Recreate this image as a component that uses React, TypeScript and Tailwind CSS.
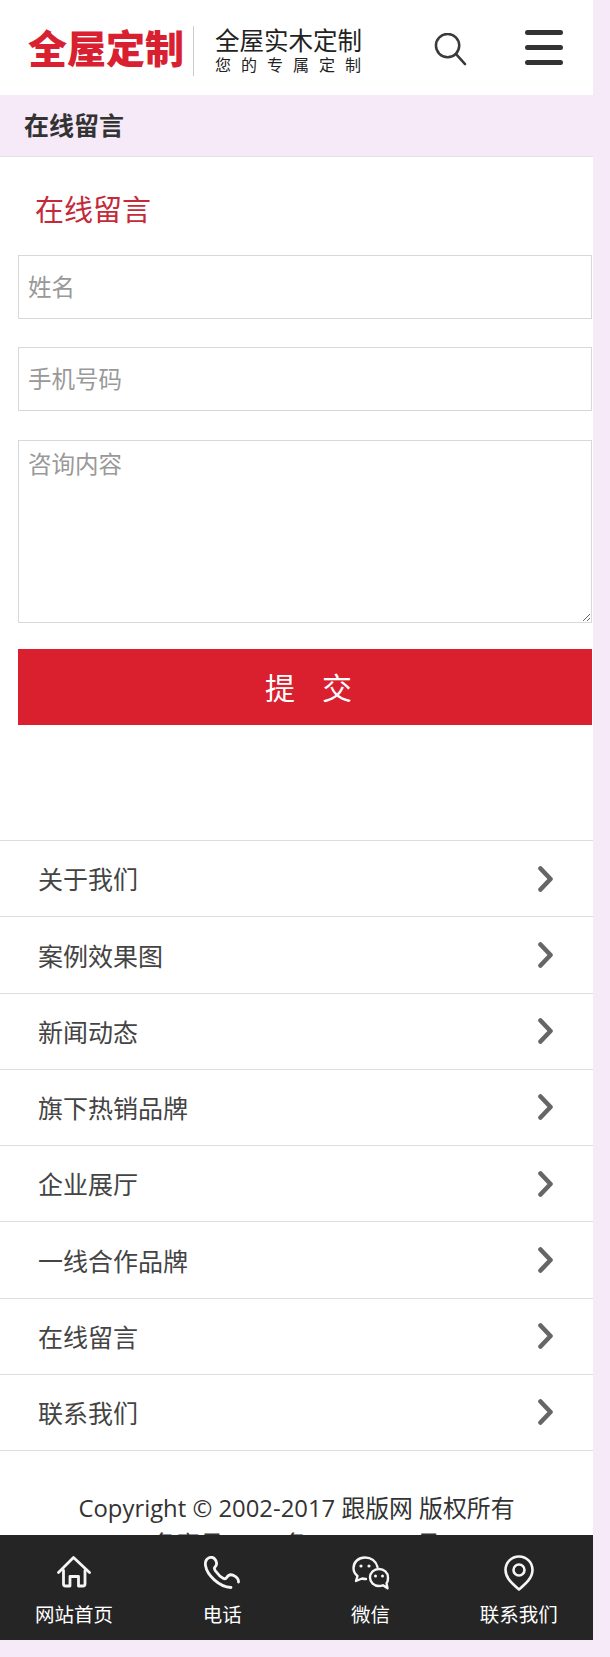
const menuItems = ["关于我们", "案例效果图", "新闻动态", "旗下热销品牌", "企业展厅", "一线合作品牌", "在线留言", "联系我们"];

function HomeIcon() {
  return (
    <svg width="34" height="34" viewBox="0 0 34 34" fill="none" stroke="#f5f5f5" strokeWidth="2.8" strokeLinecap="round" strokeLinejoin="round">
      <path d="M1.500 16.500 16.500 1.500 32.500 16.500" />
      <path d="M6.500 14.500V28c0 1.200.8 2 2 2H13V20.500h8.500V30H26c1.200 0 2-.8 2-2V14.500" />
    </svg>
  );
}

function PhoneIcon() {
  return (
    <svg width="36" height="34" viewBox="0 0 36 34" fill="none" stroke="#f5f5f5" strokeWidth="2.8" strokeLinecap="round" strokeLinejoin="round">
      <path d="M27 31.500C15 31 3 19 1.500 9.500 1 6 2.500 3 5 1.800 7.500.8 10 1.500 11.500 4c1.800 3 1.600 5-.5 7-1 1-.5 2.500.5 4 2.500 3.500 5 6 8 7.500 1.500.5 2.500.2 3.200-1 1.500-2.500 4-3.500 7-2 3 1.500 5 4 4.800 6.500" />
    </svg>
  );
}

function WechatIcon() {
  return (
    <svg width="38" height="34" viewBox="0 0 38 34" fill="none" stroke="#f5f5f5" strokeWidth="2.400" strokeLinecap="round" strokeLinejoin="round">
      <path d="M25.500 11C24 5 19 1.500 13 1.500 6.500 1.500 1.500 6 1.500 12c0 3.500 1.500 6 4 8l-1.500 5 6-2.500c1.500.4 2.500.5 4 .5" />
      <path d="M36 21.500c0-5-4-8.500-9-8.500s-9 3.500-9 8.500 4 8.500 9 8.500c1.500 0 2.500-.2 4-.7l4.500 3-1-5c1.500-1.500 1.500-3.500 1.500-5.800Z" />
      <circle cx="9" cy="10" r="1.600" fill="#f5f5f5" stroke="none" />
      <circle cx="17" cy="10" r="1.600" fill="#f5f5f5" stroke="none" />
      <circle cx="23.500" cy="20" r="1.500" fill="#f5f5f5" stroke="none" />
      <circle cx="30.500" cy="20" r="1.500" fill="#f5f5f5" stroke="none" />
    </svg>
  );
}

function PinIcon() {
  return (
    <svg width="30" height="36" viewBox="0 0 30 36" fill="none" stroke="#f5f5f5" strokeWidth="2.600" strokeLinejoin="round">
      <path d="M15 1.500C7.500 1.500 1.500 7.500 1.500 15c0 8 7 14 13.500 19.500C21.500 29 28.500 23 28.500 15 28.500 7.500 22.500 1.500 15 1.500Z" />
      <circle cx="15" cy="15" r="5.500" />
    </svg>
  );
}

const tabs = [
  { label: "网站首页", icon: <HomeIcon /> },
  { label: "电话", icon: <PhoneIcon /> },
  { label: "微信", icon: <WechatIcon /> },
  { label: "联系我们", icon: <PinIcon /> },
];

export default function App() {
  return (
    <div className="w-[610px] h-[1657px] bg-[#f6e9f8] overflow-hidden font-['Open_Sans','Noto_Sans_CJK_SC',sans-serif] text-[#333]">
      <div className="relative w-[593px] h-[1640px] bg-white overflow-hidden">
        {/* Header */}
        <header className="flex items-center h-[95px] pl-[28px]">
          <span className="w-[153px] text-[39px] leading-none font-black text-[#d92030] whitespace-nowrap">全屋定制</span>
          <span className="w-px h-[50px] mt-[6px] ml-[12px] bg-[#ccc]" />
          <div className="mt-[5px] ml-[21px] w-[150px]">
            <div className="text-[24.500px] leading-[28px] text-[#222] whitespace-nowrap">全屋实木定制</div>
            <div className="mt-[1px] text-[16px] leading-[18px] tracking-[10px] text-[#222] whitespace-nowrap">您的专属定制</div>
          </div>
          <button className="mt-[3px] ml-[69px] w-[33px] h-[34px]">
            <svg width="33" height="33" viewBox="0 0 34 34" fill="none" stroke="#3a3a3a" strokeWidth="2.600" strokeLinecap="round">
              <circle cx="14" cy="13" r="12" />
              <path d="M22.500 21.500 32 32" />
            </svg>
          </button>
          <div className="ml-[58px] flex flex-col w-[38px] gap-[10px]">
            <span className="h-[5px] rounded-sm bg-[#333]" />
            <span className="h-[5px] rounded-sm bg-[#333]" />
            <span className="h-[5px] rounded-sm bg-[#333]" />
          </div>
        </header>

        {/* Breadcrumb */}
        <div className="flex items-center h-[62px] pl-[24px] bg-[#f6e9f8] border-b border-[#e6e0e8] text-[25px] font-bold">在线留言</div>

        {/* Form */}
        <h2 className="pt-[33px] pl-[35px] text-[29px] leading-[40px] text-[#c42a38]">在线留言</h2>
        <form className="flex flex-col pl-[18px] pr-px pt-[25px]">
          <input placeholder="姓名" className="h-[64px] px-[9px] border border-[#d8d8d8] text-[23.500px] outline-none placeholder:text-[#999]" />
          <input placeholder="手机号码" className="mt-[28px] h-[64px] px-[9px] border border-[#d8d8d8] text-[23.500px] outline-none placeholder:text-[#999]" />
          <textarea placeholder="咨询内容" className="mt-[29px] h-[183px] px-[9px] py-[6px] border border-[#d8d8d8] text-[23.500px] outline-none placeholder:text-[#999]" />
          <button type="button" className="flex items-center justify-center gap-[27px] mt-[26px] h-[76px] pl-[7px] bg-[#da1f2f] text-white text-[30px]">
            <span>提</span>
            <span>交</span>
          </button>
        </form>

        {/* Menu */}
        <ul className="mt-[115px] border-b border-[#ddd]">
          {menuItems.map((item) => (
            <li key={item} className="flex items-center justify-between h-[76.250px] pl-[38px] pr-[40px] border-t border-[#ddd] text-[25px] text-[#444]">
              <span className="pt-[3px]">{item}</span>
              <svg width="15" height="26" viewBox="0 0 15 26" fill="none" stroke="#666" strokeWidth="4.600" strokeLinecap="round" strokeLinejoin="round">
                <path d="M2.500 2.500 12.500 13 2.500 23.500" />
              </svg>
            </li>
          ))}
        </ul>

        {/* Footer */}
        <footer className="pt-[39px] text-center text-[23.850px] leading-[36px] text-[#333]">
          <p>Copyright © 2002-2017 跟版网 版权所有</p>
          <p>备案号：ICP备12345678号</p>
        </footer>

        {/* Bottom bar */}
        <nav className="absolute left-0 right-0 bottom-0 grid grid-cols-4 h-[105px] bg-[#252525]">
          {tabs.map((tab) => (
            <a key={tab.label} className="flex flex-col items-center text-white text-[19.500px]">
              <span className="flex items-center justify-center h-[36px] mt-[20px]">{tab.icon}</span>
              <span className="mt-[9px] leading-[30px]">{tab.label}</span>
            </a>
          ))}
        </nav>
      </div>
    </div>
  );
}
